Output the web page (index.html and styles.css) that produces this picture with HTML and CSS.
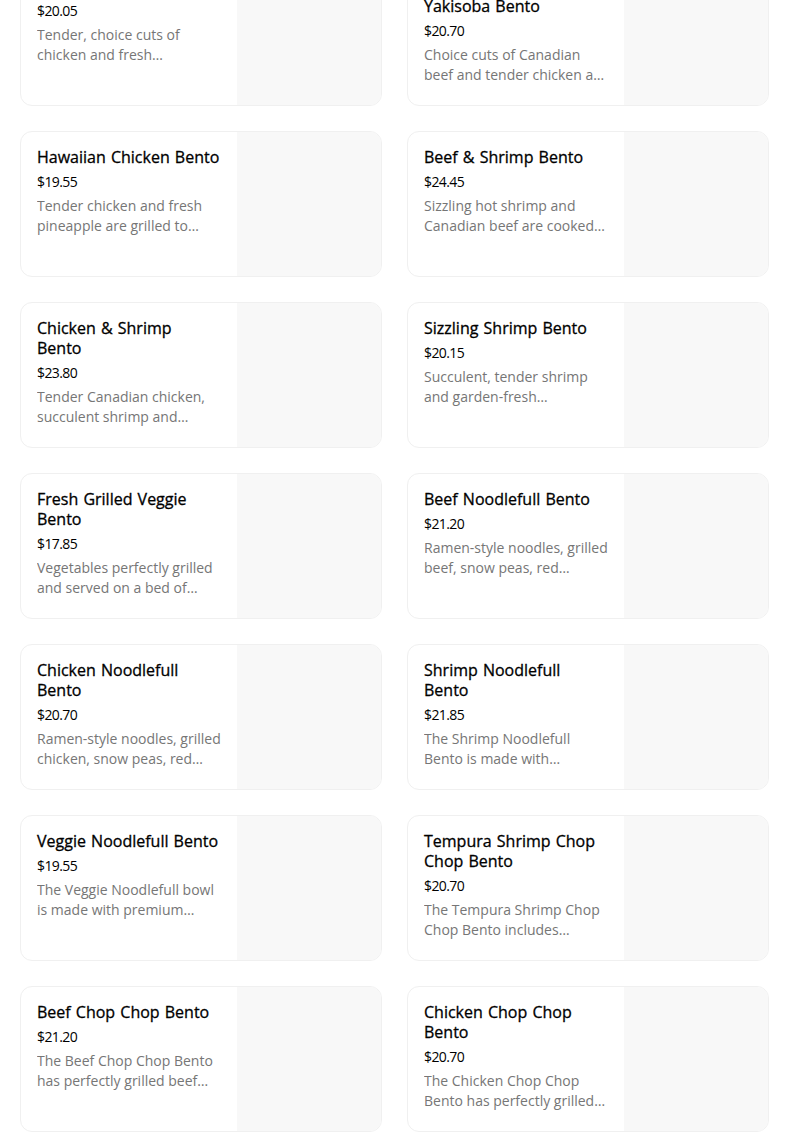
FILE: index.html
```html
<!DOCTYPE html>
<html>
<head>
<meta charset="utf-8">
<link rel="stylesheet" href="styles.css">
</head>
<body>
<div class="menu">
  <div class="card"><div class="info"><div class="title">Chicken Bento</div><div class="price">$20.05</div><div class="desc">Tender, choice cuts of chicken and fresh vegetables grilled to perfection and served on rice</div></div><div class="pic"></div></div>
  <div class="card"><div class="info"><div class="title">Beef &amp; Chicken Yakisoba Bento</div><div class="price">$20.70</div><div class="desc">Choice cuts of Canadian beef and tender chicken are grilled with yakisoba noodles</div></div><div class="pic"></div></div>
  <div class="card"><div class="info"><div class="title">Hawaiian Chicken Bento</div><div class="price">$19.55</div><div class="desc">Tender chicken and fresh pineapple are grilled to perfection with teriyaki sauce</div></div><div class="pic"></div></div>
  <div class="card"><div class="info"><div class="title">Beef &amp; Shrimp Bento</div><div class="price">$24.45</div><div class="desc">Sizzling hot shrimp and Canadian beef are cooked together with fresh vegetables</div></div><div class="pic"></div></div>
  <div class="card"><div class="info"><div class="title">Chicken &amp; Shrimp Bento</div><div class="price">$23.80</div><div class="desc">Tender Canadian chicken, succulent shrimp and garden-fresh vegetables</div></div><div class="pic"></div></div>
  <div class="card"><div class="info"><div class="title">Sizzling Shrimp Bento</div><div class="price">$20.15</div><div class="desc">Succulent, tender shrimp and garden-fresh vegetables grilled to perfection</div></div><div class="pic"></div></div>
  <div class="card"><div class="info"><div class="title">Fresh Grilled Veggie Bento</div><div class="price">$17.85</div><div class="desc">Vegetables perfectly grilled and served on a bed of Edo's famous rice</div></div><div class="pic"></div></div>
  <div class="card"><div class="info"><div class="title">Beef Noodlefull Bento</div><div class="price">$21.20</div><div class="desc">Ramen-style noodles, grilled beef, snow peas, red peppers and carrots</div></div><div class="pic"></div></div>
  <div class="card"><div class="info"><div class="title">Chicken Noodlefull Bento</div><div class="price">$20.70</div><div class="desc">Ramen-style noodles, grilled chicken, snow peas, red peppers and carrots</div></div><div class="pic"></div></div>
  <div class="card"><div class="info"><div class="title">Shrimp Noodlefull Bento</div><div class="price">$21.85</div><div class="desc">The Shrimp Noodlefull Bento is made with premium ramen-style noodles</div></div><div class="pic"></div></div>
  <div class="card"><div class="info"><div class="title">Veggie Noodlefull Bento</div><div class="price">$19.55</div><div class="desc">The Veggie Noodlefull bowl is made with premium ramen-style noodles</div></div><div class="pic"></div></div>
  <div class="card"><div class="info"><div class="title">Tempura Shrimp Chop Chop Bento</div><div class="price">$20.70</div><div class="desc">The Tempura Shrimp Chop Chop Bento includes deliciously crispy tempura shrimp</div></div><div class="pic"></div></div>
  <div class="card"><div class="info"><div class="title">Beef Chop Chop Bento</div><div class="price">$21.20</div><div class="desc">The Beef Chop Chop Bento has perfectly grilled beef chopped and served over rice</div></div><div class="pic"></div></div>
  <div class="card"><div class="info"><div class="title">Chicken Chop Chop Bento</div><div class="price">$20.70</div><div class="desc">The Chicken Chop Chop Bento has perfectly grilled chicken, chopped and served</div></div><div class="pic"></div></div>
</div>
</body>
</html>
```
FILE: styles.css
```css
html, body {
  margin: 0;
  padding: 0;
  background: #ffffff;
}
body {
  font-family: "Open Sans", "Liberation Sans", sans-serif;
  color: #000000;
  overflow: hidden;
}
.menu {
  display: grid;
  grid-template-columns: 362px 362px;
  column-gap: 25px;
  row-gap: 25px;
  padding-left: 20px;
  margin-top: -40px;
}
.card {
  display: flex;
  height: 146px;
  box-sizing: border-box;
  border: 1px solid #f0f0f0;
  border-radius: 12px;
  overflow: hidden;
  background: #ffffff;
}
.info {
  width: 216px;
  box-sizing: border-box;
  padding: 15px 16px 0 16px;
  flex: none;
}
.pic {
  flex: 1;
  background: #f8f8f8;
}
.title {
  max-width: 183.2px;
  font-size: 16px;
  line-height: 20px;
  font-weight: 500;
  word-spacing: 1px;
  color: #000000;
  -webkit-text-stroke: 0.3px #000000;
}
.price {
  margin-top: 5px;
  font-size: 14px;
  line-height: 20px;
  letter-spacing: -0.6px;
  color: #000000;
}
.desc {
  margin-top: 4px;
  font-size: 14px;
  line-height: 20px;
  color: #767676;
  display: -webkit-box;
  -webkit-line-clamp: 2;
  -webkit-box-orient: vertical;
  overflow: hidden;
}
```
